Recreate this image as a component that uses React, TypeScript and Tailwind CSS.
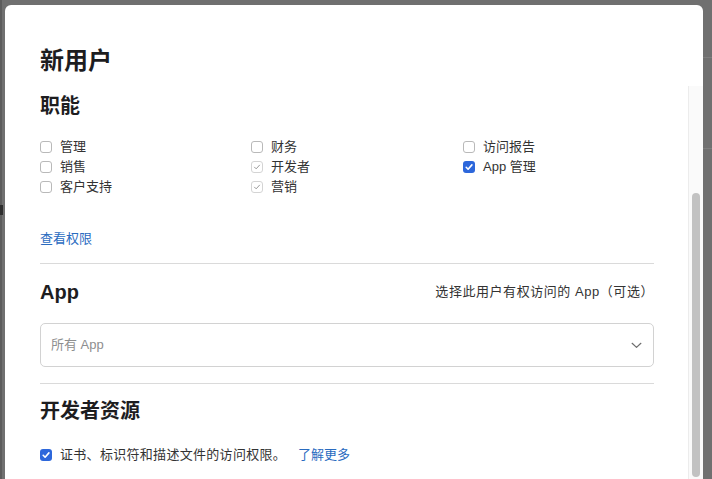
import React from 'react';

type BoxState = 'off' | 'on' | 'locked';

const font = { fontFamily: '"Liberation Sans", "Noto Sans CJK SC", sans-serif' };

const roles: { label: string; state: BoxState }[][] = [
  [
    { label: '管理', state: 'off' },
    { label: '销售', state: 'off' },
    { label: '客户支持', state: 'off' },
  ],
  [
    { label: '财务', state: 'off' },
    { label: '开发者', state: 'locked' },
    { label: '营销', state: 'locked' },
  ],
  [
    { label: '访问报告', state: 'off' },
    { label: 'App 管理', state: 'on' },
  ],
];

function Check({ state }: { state: BoxState }) {
  if (state === 'on') {
    return (
      <span className="flex h-[12px] w-[12px] shrink-0 items-center justify-center rounded-[3px] bg-[#2d67db]">
        <svg viewBox="0 0 12 12" className="h-[12px] w-[12px]" fill="none">
          <path d="M3.2 6.3 5.1 8.2 8.9 3.9" stroke="#fff" strokeWidth="1.6" strokeLinecap="round" strokeLinejoin="round" />
        </svg>
      </span>
    );
  }
  return (
    <span
      className={`flex h-[12px] w-[12px] shrink-0 items-center justify-center rounded-[3px] border bg-white ${
        state === 'locked' ? 'border-[#d4d4d4]' : 'border-[#b9b9b9]'
      }`}
    >
      {state === 'locked' && (
        <svg viewBox="0 0 12 12" className="h-[10px] w-[10px]" fill="none">
          <path d="M3 6.2 5 8.2 9 3.8" stroke="#9a9a9a" strokeWidth="1.2" strokeLinecap="round" strokeLinejoin="round" />
        </svg>
      )}
    </span>
  );
}

export default function App() {
  return (
    <div className="relative flex h-[479px] w-full overflow-hidden bg-[#707070] pl-[5px] pr-[9px] pt-[5px]" style={font}>
      {/* Background page bits peeking around the modal */}
      <div className="absolute left-0 top-0 h-full w-[2px] bg-[#5c5c5c]" />
      <div className="absolute left-0 top-[205px] h-[10px] w-[3px] bg-[#2e2e2e]" />
      <div className="absolute right-0 top-[57px] h-px w-[9px] bg-[#7e7e7e]" />
      <div className="absolute right-0 top-[148px] h-px w-[9px] bg-[#7e7e7e]" />

      <div className="flex h-full flex-1 flex-col rounded-t-[6px] bg-white">
        {/* Header */}
        <div className="pb-[9px] pl-[35px] pt-[40px]">
          <h1 className="text-[24px] font-semibold leading-[32px] text-[#1d1d1f]">新用户</h1>
        </div>

        {/* Scrollable body */}
        <div className="flex min-h-0 flex-1">
          <div className="ml-[35px] mr-[34px] w-[614px] pt-[6px]">
            <h2 className="text-[20px] font-semibold leading-[28px] text-[#1d1d1f]">职能</h2>

            <div className="mt-[17px] grid grid-cols-[211px_212px_1fr]">
              {roles.map((col, i) => (
                <div key={i} className="flex flex-col">
                  {col.map((r) => (
                    <label key={r.label} className="flex h-[20px] items-center gap-2 text-[13px] text-[#333]">
                      <Check state={r.state} />
                      {r.label}
                    </label>
                  ))}
                </div>
              ))}
            </div>

            <a className="mt-[32px] block text-[13px] leading-[20px] text-[#2a6bbf]">查看权限</a>

            <div className="mt-[14px] h-px bg-[#dadada]" />

            <div className="mt-[14px] flex h-[28px] items-center justify-between">
              <h2 className="text-[20px] font-semibold leading-[28px] text-[#1d1d1f]">App</h2>
              <span className="text-[13px] tracking-[0.55px] text-[#333]">选择此用户有权访问的 App（可选）</span>
            </div>

            <div className="mt-[17px] flex h-[44px] items-center justify-between rounded-[5px] border border-[#d2d2d2] pl-[10px] pr-[11px]">
              <span className="text-[13px] text-[#8e8e8e]">所有 App</span>
              <svg viewBox="0 0 12 8" className="h-[7px] w-[11px]" fill="none">
                <path d="M1 1.5 6 6.2 11 1.5" stroke="#6e6e6e" strokeWidth="1.4" strokeLinecap="round" strokeLinejoin="round" />
              </svg>
            </div>

            <div className="mt-[16px] h-px bg-[#dadada]" />

            <h2 className="mt-[13px] text-[20px] font-semibold leading-[28px] text-[#1d1d1f]">开发者资源</h2>

            <div className="mt-[20px] flex h-[20px] items-center gap-2 text-[13px] text-[#333]">
              <Check state="on" />
              <span className="tracking-[0.3px]">证书、标识符和描述文件的访问权限。</span>
              <a className="ml-[4px] text-[#2a6bbf]">了解更多</a>
            </div>
          </div>

          {/* Scrollbar */}
          <div className="flex w-[15px] flex-col items-center border-l border-[#ececec] bg-[#fafafa] pb-[2px] pt-[107px]">
            <div className="w-[8px] flex-1 rounded-full bg-[#c2c2c2]" />
          </div>
        </div>
      </div>
    </div>
  );
}
